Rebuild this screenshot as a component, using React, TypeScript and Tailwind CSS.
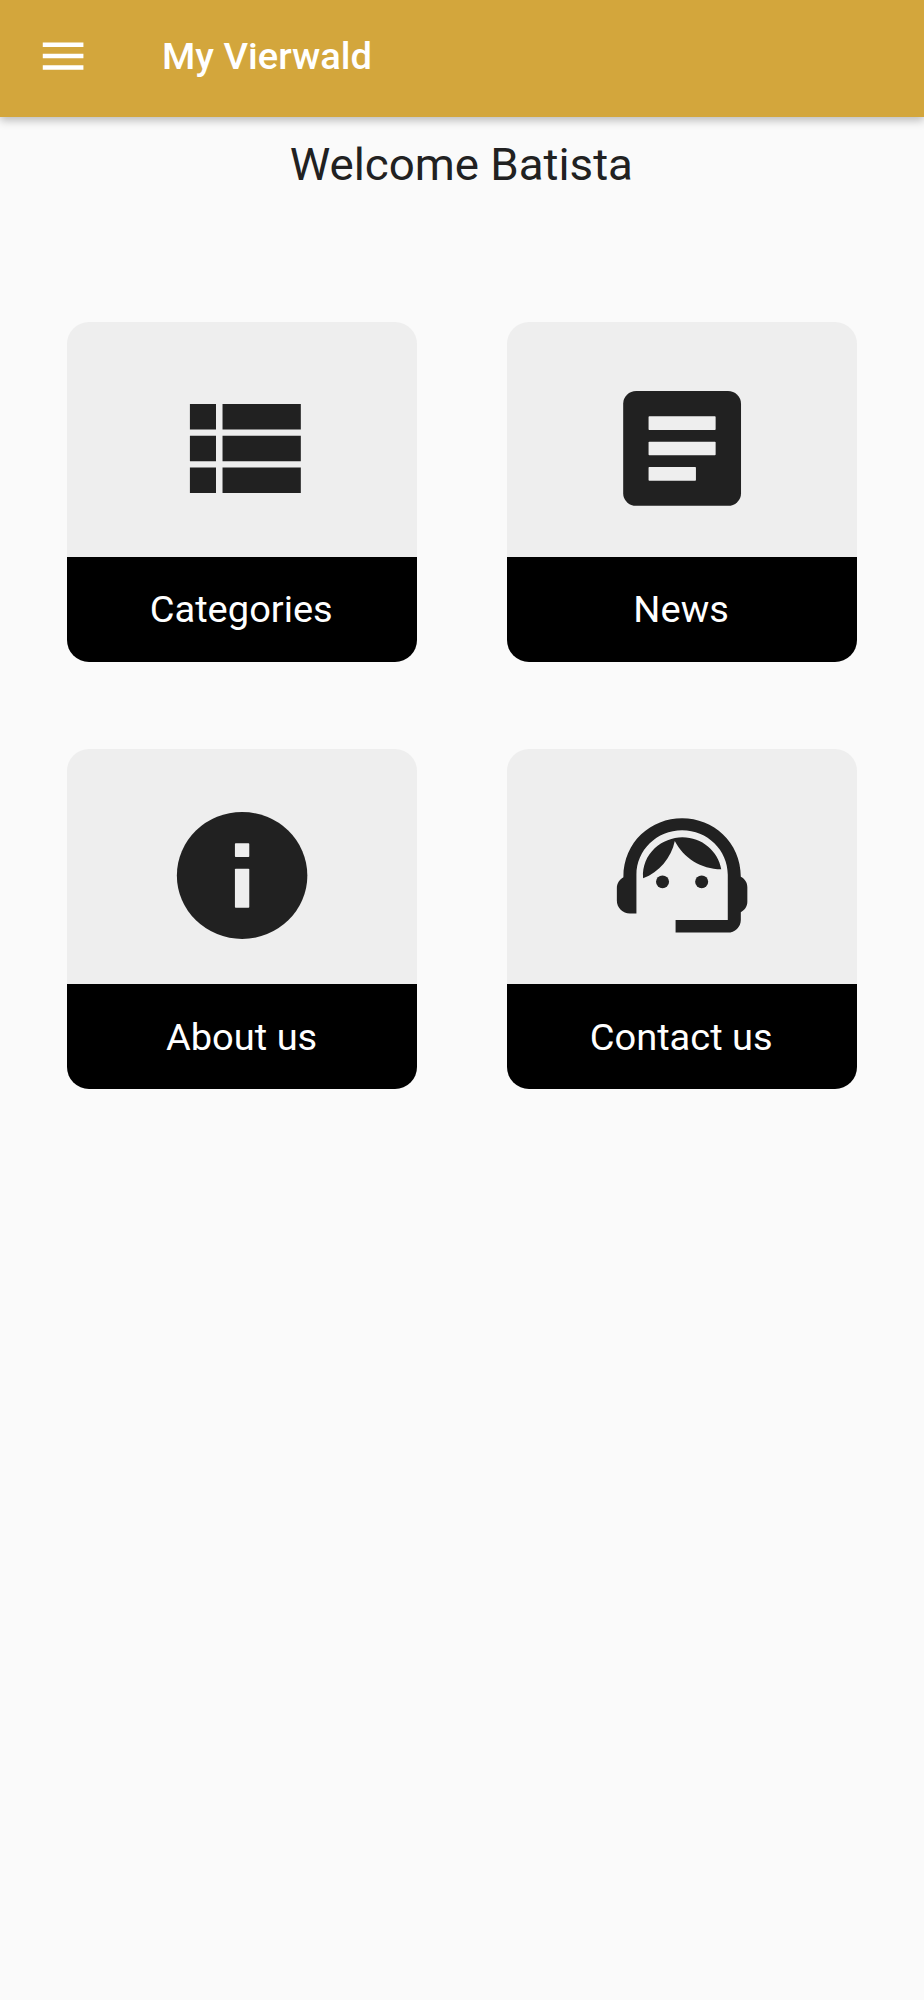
import type { ReactNode } from "react";

function ViewListIcon() {
  return (
    <path d="M4 14h4v-4H4v4zm0 5h4v-4H4v4zM4 9h4V5H4v4zm5 5h12v-4H9v4zm0 5h12v-4H9v4zM9 5v4h12V5H9z" />
  );
}

function ArticleIcon() {
  return (
    <>
      <rect x="2.97" y="2.96" width="18.06" height="18.08" rx="2" />
      <g className="fill-[#eeeeee]">
        <rect x="6.86" y="6.93" width="10.28" height="2.15" rx="0.12" />
        <rect x="6.86" y="10.93" width="10.28" height="2.15" rx="0.12" />
        <rect x="6.86" y="14.93" width="7.26" height="2.15" rx="0.12" />
      </g>
    </>
  );
}

function InfoIcon() {
  return (
    <>
      <circle cx="12" cy="12" r="10" />
      <g className="fill-[#eeeeee]">
        <rect x="10.9" y="6.92" width="2.2" height="2.16" rx="0.12" />
        <rect x="10.9" y="10.95" width="2.2" height="6.13" rx="0.12" />
      </g>
    </>
  );
}

function SupportAgentIcon() {
  return (
    <>
      <path d="M21 12.22C21 6.73 16.74 3 12 3c-4.69 0-9 3.65-9 9.28-.6.34-1 .98-1 1.72v2c0 1.1.9 2 2 2h1v-6.1c0-3.87 3.13-7 7-7s7 3.13 7 7V19h-8v2h8c1.1 0 2-.9 2-2v-1.22c.59-.31 1-.92 1-1.64v-2.3c0-.7-.41-1.31-1-1.62z" />
      <circle cx="9" cy="13" r="1" />
      <circle cx="15" cy="13" r="1" />
      <path d="M18 11.03C17.52 8.18 15.04 6 12.05 6c-3.03 0-6.29 2.51-6.03 6.45 2.47-1.01 4.33-3.21 4.86-5.89 1.31 2.63 4 4.44 7.12 4.47z" />
    </>
  );
}

function Tile({ label, children }: { label: string; children: ReactNode }) {
  return (
    <button
      type="button"
      className="flex h-[339.5px] flex-col overflow-hidden rounded-[22px] bg-[#eeeeee]"
    >
      <span className="flex h-[235px] w-full items-end justify-center pb-[32.6px]">
        <svg
          viewBox="0.03 -0.04 24 24"
          preserveAspectRatio="none"
          className="h-[152.4px] w-[156.6px] fill-[#212121]"
        >
          {children}
        </svg>
      </span>
      <span className="flex w-full flex-1 items-center justify-center bg-black pt-[1.5px] pr-[1.5px] text-[37.5px] leading-none text-white">
        <span className="scale-x-[1.014]">{label}</span>
      </span>
    </button>
  );
}

export default function App() {
  return (
    <div className="min-h-screen bg-[#fafafa] font-[Roboto,sans-serif] text-[#212121]">
      <header className="flex h-[117px] items-center bg-[#d3a63c] pb-[5.5px] pl-9 text-white shadow-[0_3px_9px_rgba(0,0,0,0.28)]">
        <button type="button" aria-label="Menu">
          <svg viewBox="0 0 24 24" className="size-[54.2px] fill-current">
            <path d="M3 18h18v-2H3v2zm0-5h18v-2H3v2zm0-7v2h18V6H3z" />
          </svg>
        </button>
        <span className="ml-[72px] origin-left scale-x-[1.016] pt-[1.5px] text-[37.5px] leading-none font-medium">
          My Vierwald
        </span>
      </header>

      <main>
        <h1 className="mt-5 pr-[1.5px] text-center text-[44.5px] leading-[56px]">
          <span className="inline-block scale-x-[1.026]">Welcome Batista</span>
        </h1>
        <div className="mt-[129px] grid grid-cols-2 gap-x-[90px] gap-y-[87.9px] px-[67px]">
          <Tile label="Categories">
            <ViewListIcon />
          </Tile>
          <Tile label="News">
            <ArticleIcon />
          </Tile>
          <Tile label="About us">
            <InfoIcon />
          </Tile>
          <Tile label="Contact us">
            <SupportAgentIcon />
          </Tile>
        </div>
      </main>
    </div>
  );
}
